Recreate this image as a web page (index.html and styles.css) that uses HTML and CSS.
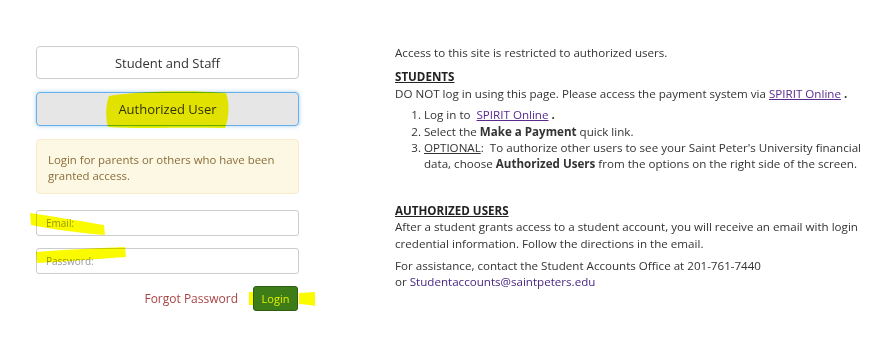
FILE: index.html
```html
<!DOCTYPE html>
<html lang="en">
<head>
  <meta charset="UTF-8">
  <title>Student Account Login</title>
  <link rel="stylesheet" href="styles.css">
</head>
<body>
  <div class="page">
    <section class="login">
      <button class="choice">Student and Staff</button>
      <button class="choice active">Authorized User</button>
      <div class="alert">Login for parents or others who have been granted access.</div>
      <form class="login-form">
        <input type="text" placeholder="Email:">
        <input type="password" placeholder="Password:">
        <div class="actions">
          <a href="#" class="forgot">Forgot Password</a>
          <button type="submit" class="btn-login">Login</button>
        </div>
      </form>
    </section>
    <section class="info">
      <p>Access to this site is restricted to authorized users.</p>
      <h3>STUDENTS</h3>
      <p class="tight">DO NOT log in using this page. Please access the payment system via <a href="#">SPIRIT Online</a> <b>.</b></p>
      <ol>
        <li>Log in to &nbsp;<a href="#">SPIRIT Online</a> <b>.</b></li>
        <li>Select the <b>Make a Payment</b> quick link.</li>
        <li><u>OPTIONAL</u>:&nbsp; To authorize other users to see your Saint Peter's University financial data, choose <b>Authorized Users</b> from the options on the right side of the screen.</li>
      </ol>
      <h3 class="second">AUTHORIZED USERS</h3>
      <p>After a student grants access to a student account, you will receive an email with login credential information. Follow the directions in the email.</p>
      <p>For assistance, contact the Student Accounts Office at 201-761-7440<br>or <a href="#" class="mail">Studentaccounts@saintpeters.edu</a></p>
    </section>
  </div>

  <!-- highlighter marks drawn over the screenshot -->
  <svg class="marks" width="890" height="359" viewBox="0 0 890 359">
    <path d="M109 96 C140 91 190 90 226 93 C230 104 229 118 225 128 C180 127 140 129 108 127 C105 116 106 104 109 96 Z"/>
    <path d="M30 213 C50 216 80 221 104 225 L105 235 C80 233 50 229 31 225 Z"/>
    <path d="M36 252 C60 250 95 248 125 247 L126 257 C95 259 60 262 37 263 Z"/>
    <path d="M249 292 L254 292 L254 305 L249 305 Z"/>
    <path d="M299 293 C305 293 310 292 315 292 L315 306 C310 305 304 304 299 304 Z"/>
  </svg>
</body>
</html>
```

FILE: styles.css
```css
* { box-sizing: border-box; }
body {
  margin: 0;
  background: #fff;
  font-family: 'Open Sans', 'Noto Sans', sans-serif;
  color: #333;
  position: relative;
}
.page {
  display: flex;
  padding-left: 36px;
}
.login {
  width: 263px;
  padding-top: 46px;
  display: flex;
  flex-direction: column;
}
.choice {
  height: 33px;
  border: 1px solid #ccc;
  border-radius: 4px;
  background: #fff;
  color: #333;
  font-family: inherit;
  font-size: 13px;
  margin-bottom: 13px;
}
.choice.active {
  height: 34px;
  background: #e6e6e6;
  border-color: #66afe9;
  box-shadow: 0 0 4px rgba(102, 175, 233, 0.6);
}
.alert {
  height: 55px;
  background: #fcf8e3;
  border: 1px solid #faebcc;
  border-radius: 4px;
  color: #8a6d3b;
  font-size: 11.4px;
  line-height: 16px;
  padding: 12px 10px 12px 11px;
}
.login-form {
  margin-top: 16px;
  display: flex;
  flex-direction: column;
}
.login-form input {
  height: 26px;
  border: 1px solid #ccc;
  border-radius: 3px;
  padding: 0 9px;
  font-family: inherit;
  font-size: 10px;
  margin-bottom: 12px;
}
.login-form input::placeholder { color: #999; }
.actions {
  display: flex;
  justify-content: flex-end;
  align-items: center;
  gap: 15px;
  padding-right: 1px;
}
.forgot {
  color: #a94442;
  text-decoration: none;
  font-size: 12px;
}
.btn-login {
  width: 45px;
  height: 25px;
  background: #3e7c17;
  border: 1px solid #2d5e10;
  border-radius: 3px;
  color: #e3f000;
  font-family: inherit;
  font-size: 11px;
  padding: 0;
}
.info {
  margin-left: 96px;
  width: 475px;
  padding-top: 45px;
  font-size: 11.6px;
  line-height: 16.4px;
}
.info p { margin: 0 0 6px; }
.info p.tight { margin-bottom: 5px; }
.info h3 {
  margin: 8px 0 0;
  font-size: 11.6px;
  text-decoration: underline;
  color: #222;
}
.info h3.second { margin-top: 30px; }
.info ol {
  margin: 0;
  padding-left: 29px;
}
.info a {
  color: #5a2a90;
}
.info a.mail {
  text-decoration: none;
  color: #4a2580;
}
.marks {
  position: absolute;
  top: 0;
  left: 0;
  pointer-events: none;
  mix-blend-mode: multiply;
}
.marks path { fill: #fbfb00; }
```
